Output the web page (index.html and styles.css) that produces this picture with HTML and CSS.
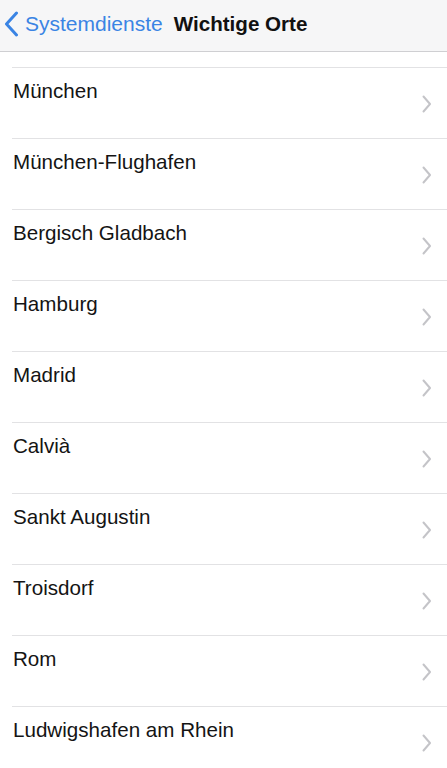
FILE: index.html
```html
<!DOCTYPE html>
<html lang="de">
<head>
<meta charset="utf-8">
<title>Wichtige Orte</title>
<link rel="stylesheet" href="styles.css">
</head>
<body>
<header class="nav">
  <a class="back">
    <svg class="back-icon" width="15" height="26" viewBox="0 0 15 26"><path d="M12.5 2 L2.5 13 L12.5 24" fill="none" stroke="#3a84e4" stroke-width="3" stroke-linecap="round" stroke-linejoin="round"/></svg>
    <span class="back-label">Systemdienste</span>
  </a>
  <h1 class="title">Wichtige Orte</h1>
</header>
<main class="list">
  <div class="spacer"></div>
  <div class="row"><span class="label">München</span><svg class="chev" width="10" height="18" viewBox="0 0 10 18"><path d="M1.5 1.5 L8 9 L1.5 16.5" fill="none" stroke="#c4c4c8" stroke-width="2" stroke-linecap="round" stroke-linejoin="round"/></svg></div>
  <div class="row"><span class="label">München-Flughafen</span><svg class="chev" width="10" height="18" viewBox="0 0 10 18"><path d="M1.5 1.5 L8 9 L1.5 16.5" fill="none" stroke="#c4c4c8" stroke-width="2" stroke-linecap="round" stroke-linejoin="round"/></svg></div>
  <div class="row"><span class="label">Bergisch Gladbach</span><svg class="chev" width="10" height="18" viewBox="0 0 10 18"><path d="M1.5 1.5 L8 9 L1.5 16.5" fill="none" stroke="#c4c4c8" stroke-width="2" stroke-linecap="round" stroke-linejoin="round"/></svg></div>
  <div class="row"><span class="label">Hamburg</span><svg class="chev" width="10" height="18" viewBox="0 0 10 18"><path d="M1.5 1.5 L8 9 L1.5 16.5" fill="none" stroke="#c4c4c8" stroke-width="2" stroke-linecap="round" stroke-linejoin="round"/></svg></div>
  <div class="row"><span class="label">Madrid</span><svg class="chev" width="10" height="18" viewBox="0 0 10 18"><path d="M1.5 1.5 L8 9 L1.5 16.5" fill="none" stroke="#c4c4c8" stroke-width="2" stroke-linecap="round" stroke-linejoin="round"/></svg></div>
  <div class="row"><span class="label">Calvià</span><svg class="chev" width="10" height="18" viewBox="0 0 10 18"><path d="M1.5 1.5 L8 9 L1.5 16.5" fill="none" stroke="#c4c4c8" stroke-width="2" stroke-linecap="round" stroke-linejoin="round"/></svg></div>
  <div class="row"><span class="label">Sankt Augustin</span><svg class="chev" width="10" height="18" viewBox="0 0 10 18"><path d="M1.5 1.5 L8 9 L1.5 16.5" fill="none" stroke="#c4c4c8" stroke-width="2" stroke-linecap="round" stroke-linejoin="round"/></svg></div>
  <div class="row"><span class="label">Troisdorf</span><svg class="chev" width="10" height="18" viewBox="0 0 10 18"><path d="M1.5 1.5 L8 9 L1.5 16.5" fill="none" stroke="#c4c4c8" stroke-width="2" stroke-linecap="round" stroke-linejoin="round"/></svg></div>
  <div class="row"><span class="label">Rom</span><svg class="chev" width="10" height="18" viewBox="0 0 10 18"><path d="M1.5 1.5 L8 9 L1.5 16.5" fill="none" stroke="#c4c4c8" stroke-width="2" stroke-linecap="round" stroke-linejoin="round"/></svg></div>
  <div class="row"><span class="label">Ludwigshafen am Rhein</span><svg class="chev" width="10" height="18" viewBox="0 0 10 18"><path d="M1.5 1.5 L8 9 L1.5 16.5" fill="none" stroke="#c4c4c8" stroke-width="2" stroke-linecap="round" stroke-linejoin="round"/></svg></div>
</main>
</body>
</html>
```

FILE: styles.css
```css
html, body {
  margin: 0;
  padding: 0;
  background: #ffffff;
  font-family: "Liberation Sans", Arial, sans-serif;
  overflow: hidden;
}

.nav {
  height: 52px;
  box-sizing: border-box;
  background: #f6f6f7;
  border-bottom: 1px solid #cfcfd2;
  display: flex;
  align-items: center;
  padding: 0 0 3px 4px;
}

.back {
  display: flex;
  align-items: center;
  gap: 6px;
  color: #3a84e4;
}

.back-icon {
  display: block;
}

.back-label {
  font-size: 21px;
  line-height: 24px;
}

.title {
  margin: 0 0 0 11px;
  font-size: 20.6px;
  line-height: 24px;
  font-weight: bold;
  color: #111111;
}

.list {
  display: flex;
  flex-direction: column;
}

.spacer {
  height: 15px;
  border-bottom: 1px solid #e2e2e4;
  margin-left: 12px;
}

.row {
  height: 70px;
  margin-left: 12px;
  border-bottom: 1px solid #e2e2e4;
  display: flex;
  justify-content: space-between;
  align-items: flex-start;
  padding-right: 15px;
}

.label {
  margin-top: 11px;
  margin-left: 1px;
  font-size: 20.6px;
  line-height: 24px;
  color: #141414;
}

.chev {
  display: block;
  margin-top: 27px;
}
```
